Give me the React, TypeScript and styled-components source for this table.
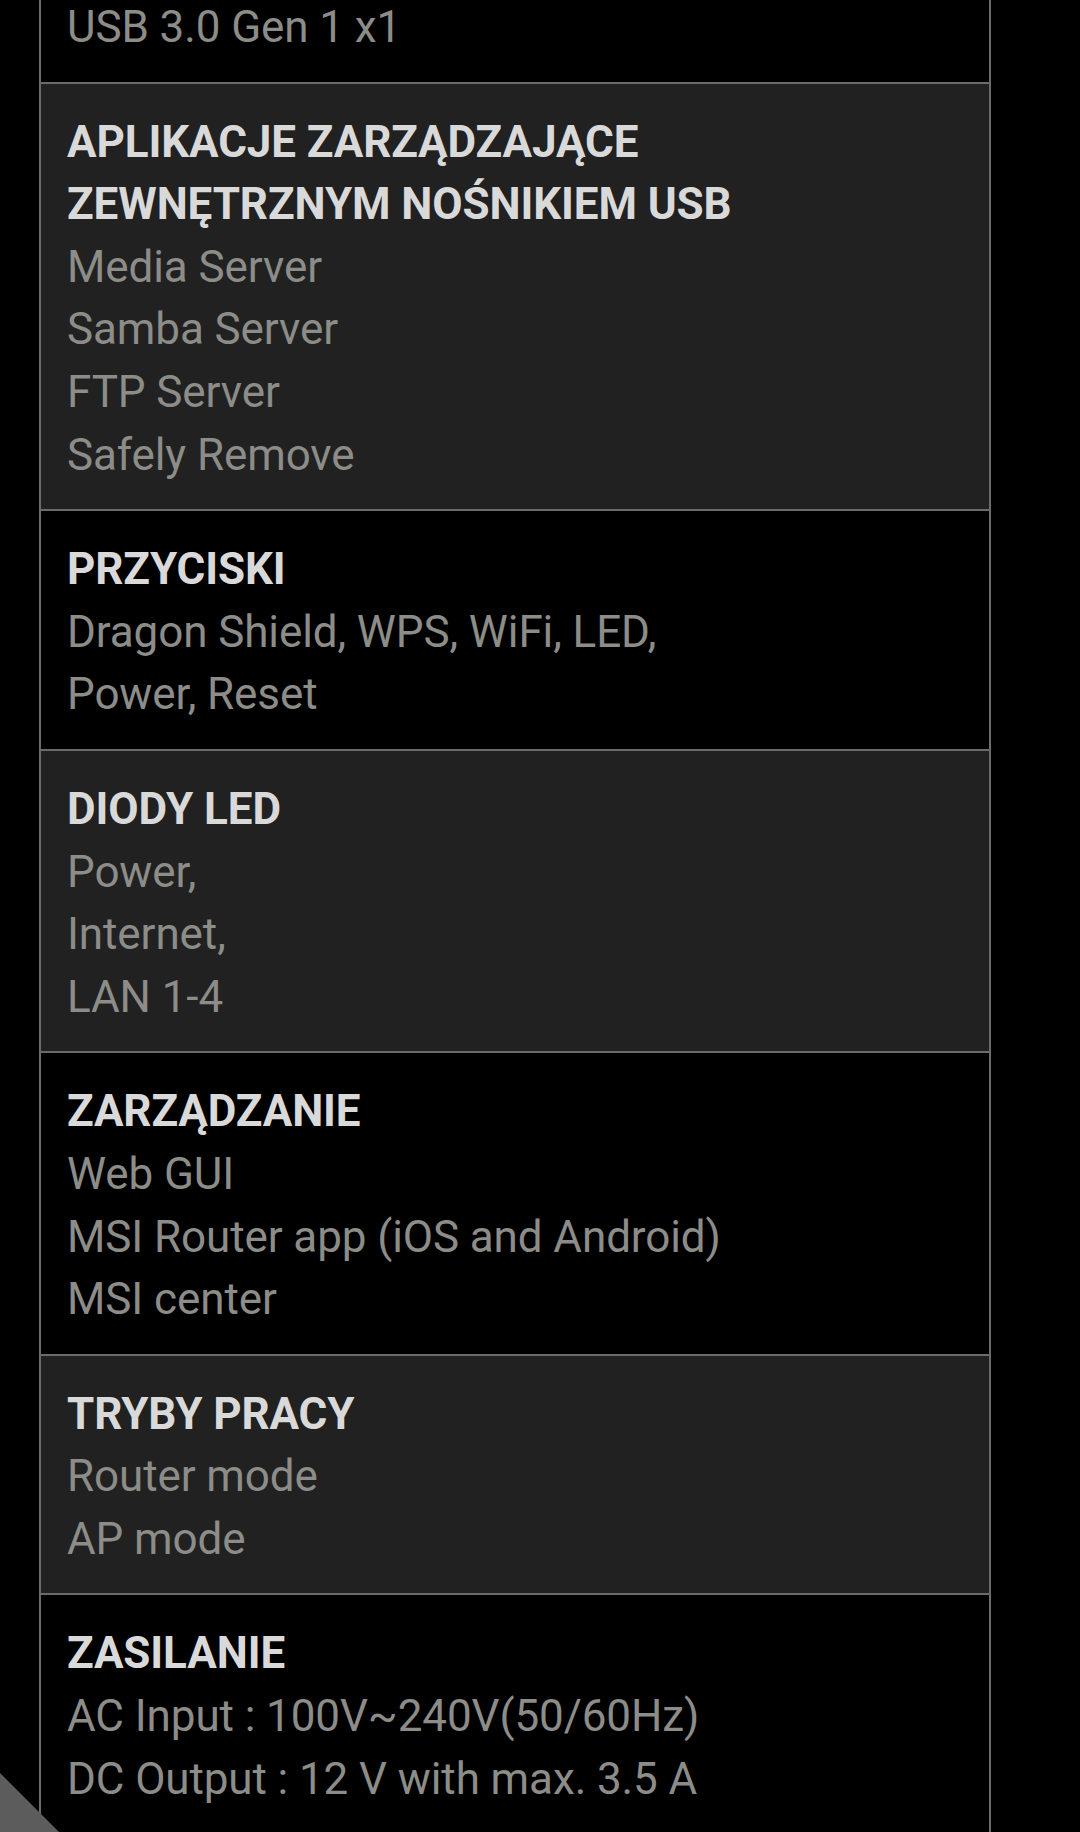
import React from "react";
import styled, { createGlobalStyle } from "styled-components";

const GlobalStyle = createGlobalStyle`
  html, body {
    margin: 0;
    padding: 0;
    background: #000;
  }
  body {
    font-family: Roboto, "Noto Sans", "Liberation Sans", sans-serif;
    overflow: hidden;
  }
`;

const Page = styled.div`
  position: relative;
  width: 1080px;
  height: 1832px;
  overflow: hidden;
  background: #000;
`;

const Table = styled.div`
  margin-left: 39px;
  margin-top: -4px;
  width: 952px;
  box-sizing: border-box;
  border-left: 2px solid #6b6b6b;
  border-right: 2px solid #6b6b6b;
  display: flex;
  flex-direction: column;
`;

const Row = styled.div<{ $shade: boolean; $first?: boolean }>`
  background: ${(p) => (p.$shade ? "#212121" : "#000")};
  border-bottom: 2px solid #6b6b6b;
  padding: ${(p) => (p.$first ? "0" : "27px")} 24px 23px 26px;
  display: flex;
  flex-direction: column;
`;

const Title = styled.div`
  font-size: 44px;
  line-height: 62.6px;
  letter-spacing: -0.1px;
  font-weight: 700;
  color: #d9d9d9;
`;

const Line = styled.div`
  font-size: 44px;
  line-height: 62.6px;
  letter-spacing: -0.1px;
  font-weight: 400;
  color: #8c8c88;
`;

const Corner = styled.div`
  position: absolute;
  left: 0;
  bottom: 0;
  width: 59px;
  height: 59px;
  background: #5c5c5c;
  clip-path: polygon(0 0, 0 100%, 100% 100%);
`;

type Spec = { title?: string[]; lines: string[] };

const rows: Spec[] = [
  { lines: ["USB 3.0 Gen 1 x1"] },
  {
    title: ["APLIKACJE ZARZĄDZAJĄCE", "ZEWNĘTRZNYM NOŚNIKIEM USB"],
    lines: ["Media Server", "Samba Server", "FTP Server", "Safely Remove"],
  },
  { title: ["PRZYCISKI"], lines: ["Dragon Shield, WPS, WiFi, LED,", "Power, Reset"] },
  { title: ["DIODY LED"], lines: ["Power,", "Internet,", "LAN 1-4"] },
  {
    title: ["ZARZĄDZANIE"],
    lines: ["Web GUI", "MSI Router app (iOS and Android)", "MSI center"],
  },
  { title: ["TRYBY PRACY"], lines: ["Router mode", "AP mode"] },
  {
    title: ["ZASILANIE"],
    lines: ["AC Input : 100V~240V(50/60Hz)", "DC Output : 12 V with max. 3.5 A"],
  },
];

export default function App() {
  return (
    <Page>
      <GlobalStyle />
      <Table>
        {rows.map((r, i) => (
          <Row key={i} $shade={i % 2 === 1} $first={i === 0}>
            {r.title?.map((t) => (
              <Title key={t}>{t}</Title>
            ))}
            {r.lines.map((l) => (
              <Line key={l}>{l}</Line>
            ))}
          </Row>
        ))}
      </Table>
      <Corner />
    </Page>
  );
}
